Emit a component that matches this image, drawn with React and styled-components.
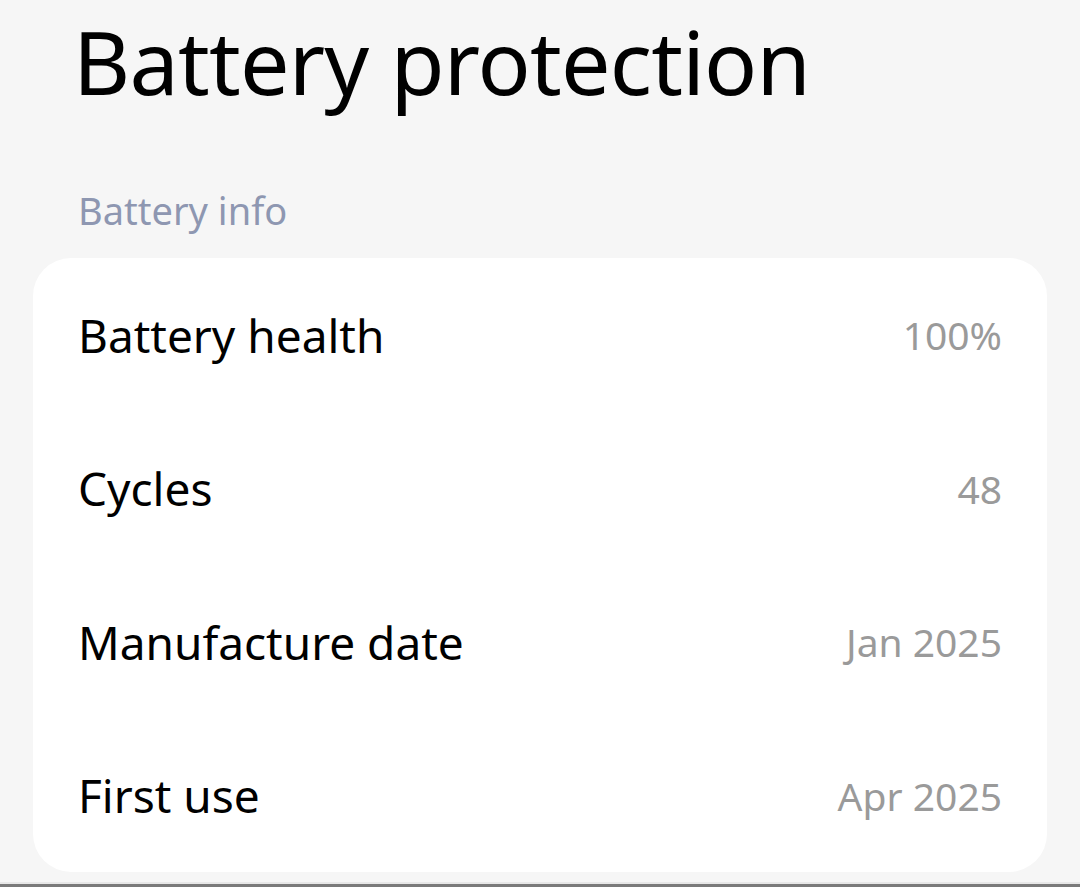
import React from "react";
import styled, { createGlobalStyle } from "styled-components";

const Global = createGlobalStyle`
  html, body { margin: 0; padding: 0; background: #f6f6f6; }
  body { font-family: "Noto Sans", "Open Sans", sans-serif; }
`;

const Page = styled.div`
  width: 1080px;
  height: 887px;
  box-sizing: border-box;
  background: #f6f6f6;
  display: flex;
  flex-direction: column;
  overflow: hidden;
`;

const Title = styled.h1`
  margin: 0;
  padding: 0 0 22px 73px;
  height: 146px;
  display: flex;
  align-items: center;
  font-size: 88px;
  font-weight: 400;
  color: #000;
  line-height: 1.2;
  box-sizing: border-box;
  letter-spacing: -0.8px;
  white-space: nowrap;
`;

const SectionLabel = styled.div`
  padding: 16px 0 0 78px;
  height: 112px;
  display: flex;
  align-items: center;
  font-size: 38px;
  color: #8e97b1;
  box-sizing: border-box;
`;

const Card = styled.div`
  margin: 0 33px;
  background: #fff;
  border-radius: 38px;
  display: flex;
  flex-direction: column;
`;

const Row = styled.div`
  height: 153.5px;
  padding: 0 45px;
  display: flex;
  align-items: center;
  justify-content: space-between;
`;

const Label = styled.span`
  font-size: 46px;
  color: #000;
`;

const Value = styled.span`
  font-size: 39px;
  color: #9a9a9a;
`;

const Spacer = styled.div`
  flex: 1;
`;

const BottomEdge = styled.div`
  height: 3px;
  background: #7a7a7a;
  border-top: 2px solid #e8e8e8;
`;

const rows = [
  ["Battery health", "100%"],
  ["Cycles", "48"],
  ["Manufacture date", "Jan 2025"],
  ["First use", "Apr 2025"],
];

export default function App() {
  return (
    <Page>
      <Global />
      <Title>Battery protection</Title>
      <SectionLabel>Battery info</SectionLabel>
      <Card>
        {rows.map(([l, v]) => (
          <Row key={l}>
            <Label>{l}</Label>
            <Value>{v}</Value>
          </Row>
        ))}
      </Card>
      <Spacer />
      <BottomEdge />
    </Page>
  );
}
